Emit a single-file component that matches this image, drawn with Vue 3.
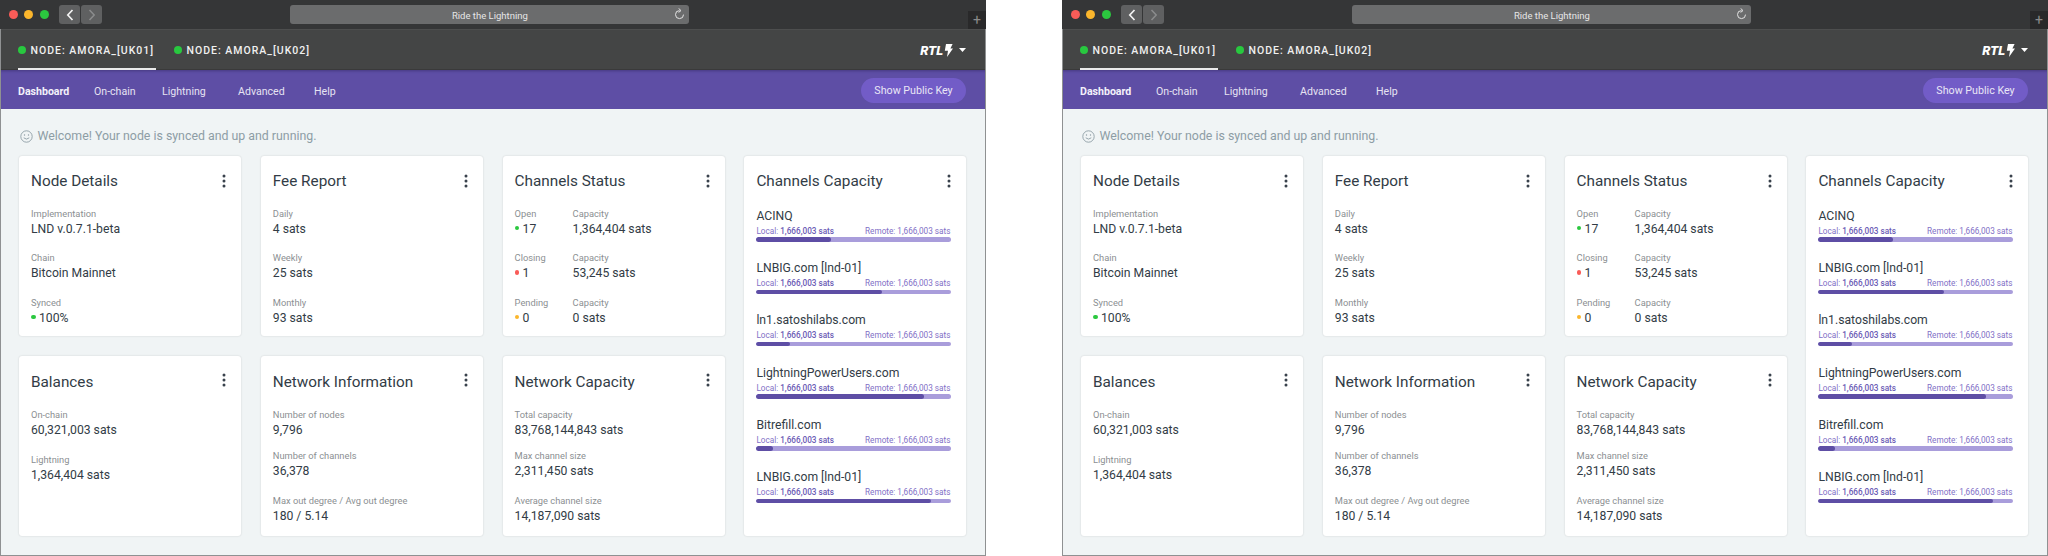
<script setup>
const windows = [1, 2]
const navItems = [
  { label: 'Dashboard', cls: 'active' },
  { label: 'On-chain', cls: 'n2' },
  { label: 'Lightning', cls: 'n3' },
  { label: 'Advanced', cls: 'n4' },
  { label: 'Help', cls: 'n5' }
]
const cards = [
  { title: 'Node Details', rows: [
    { label: 'Implementation', value: 'LND v.0.7.1-beta' },
    { label: 'Chain', value: 'Bitcoin Mainnet' },
    { label: 'Synced', value: '100%', dot: 'green' }
  ] },
  { title: 'Fee Report', rows: [
    { label: 'Daily', value: '4 sats' },
    { label: 'Weekly', value: '25 sats' },
    { label: 'Monthly', value: '93 sats' }
  ] },
  { title: 'Channels Status', status: true, rows: [
    { label: 'Open', value: '17', dot: 'green', cap: '1,364,404 sats' },
    { label: 'Closing', value: '1', dot: 'red', cap: '53,245 sats' },
    { label: 'Pending', value: '0', dot: 'amber', cap: '0 sats' }
  ] },
  { title: 'Balances', low: true, rows: [
    { label: 'On-chain', value: '60,321,003 sats' },
    { label: 'Lightning', value: '1,364,404 sats' }
  ] },
  { title: 'Network Information', low: true, rows: [
    { label: 'Number of nodes', value: '9,796', tight: true },
    { label: 'Number of channels', value: '36,378' },
    { label: 'Max out degree / Avg out degree', value: '180 / 5.14' }
  ] },
  { title: 'Network Capacity', low: true, rows: [
    { label: 'Total capacity', value: '83,768,144,843 sats', tight: true },
    { label: 'Max channel size', value: '2,311,450 sats' },
    { label: 'Average channel size', value: '14,187,090 sats' }
  ] }
]
const peers = [
  { name: 'ACINQ', pct: 38.5 },
  { name: 'LNBIG.com [lnd-01]', pct: 64.4 },
  { name: 'ln1.satoshilabs.com', pct: 17 },
  { name: 'LightningPowerUsers.com', pct: 85.8 },
  { name: 'Bitrefill.com', pct: 8.6 },
  { name: 'LNBIG.com [lnd-01]', pct: 89.4 }
]
</script>

<template>
  <div class="screen">
    <section v-for="w in windows" :key="w" class="window">
      <header class="titlebar">
        <span class="light red"></span>
        <span class="light yellow"></span>
        <span class="light green"></span>
        <span class="navbtn first">
          <svg width="8" height="12" viewBox="0 0 8 12"><path d="M6.5 1 L1.8 6 L6.5 11" fill="none" stroke="#f2f2f2" stroke-width="1.7"/></svg>
        </span>
        <span class="navbtn">
          <svg width="8" height="12" viewBox="0 0 8 12"><path d="M1.5 1 L6.2 6 L1.5 11" fill="none" stroke="#8b8c8d" stroke-width="1.5"/></svg>
        </span>
        <div class="address">
          <span>Ride the Lightning</span>
          <svg class="reload" width="11" height="12" viewBox="0 0 11 12"><path d="M5.5 2.6 A4 4 0 1 0 9.5 6.6" fill="none" stroke="#e4e4e4" stroke-width="1"/><path d="M4.6 0.4 L7 2.6 L4.6 4.4" fill="none" stroke="#e4e4e4" stroke-width="1"/></svg>
        </div>
        <div class="plus">+</div>
      </header>

      <div class="nodebar">
        <div class="tab selected"><i class="nodedot"></i>NODE: AMORA_[UK01]</div>
        <div class="tab"><i class="nodedot"></i>NODE: AMORA_[UK02]</div>
        <div class="logo">
          <span class="rtl">RTL</span>
          <svg class="bolt" width="9" height="13" viewBox="0 0 9 13"><path d="M2 0 H8.6 L6.4 4.4 H9 L3 13 L4 6.8 H0.8 Z" fill="#fff"/></svg>
          <svg class="caret" width="7" height="4" viewBox="0 0 7 4"><path d="M0 0 H7 L3.5 4 Z" fill="#fff"/></svg>
        </div>
      </div>

      <nav class="menu">
        <a v-for="item in navItems" :key="item.label" :class="['menuitem', item.cls]">{{ item.label }}</a>
        <button class="pubkey">Show Public Key</button>
      </nav>

      <main class="content">
        <div class="welcome">
          <svg width="13" height="13" viewBox="0 0 13 13"><circle cx="6.5" cy="6.5" r="5.7" fill="none" stroke="#8d9da5" stroke-width="0.9"/><circle cx="4.5" cy="5" r="0.7" fill="#8d9da5"/><circle cx="8.5" cy="5" r="0.7" fill="#8d9da5"/><path d="M3.7 7.8 Q6.5 10.4 9.3 7.8" fill="none" stroke="#8d9da5" stroke-width="0.9"/></svg>
          <span>Welcome! Your node is synced and up and running.</span>
        </div>

        <div class="grid">
          <article v-for="card in cards" :key="card.title" :class="['card', { low: card.low }]">
            <div class="cardhead">
              <h2>{{ card.title }}</h2>
              <svg class="kebab" width="4" height="14" viewBox="0 0 4 14"><circle cx="2" cy="2" r="1.5"/><circle cx="2" cy="7" r="1.5"/><circle cx="2" cy="12" r="1.5"/></svg>
            </div>
            <div v-for="row in card.rows" :key="row.label" :class="['row', { tight: row.tight, status: card.status }]">
              <div class="cell">
                <div class="label">{{ row.label }}</div>
                <div class="value"><i v-if="row.dot" :class="['dot', row.dot]"></i>{{ row.value }}</div>
              </div>
              <div v-if="card.status" class="cell">
                <div class="label">Capacity</div>
                <div class="value">{{ row.cap }}</div>
              </div>
            </div>
          </article>

          <article class="card capacity">
            <div class="cardhead">
              <h2>Channels Capacity</h2>
              <svg class="kebab" width="4" height="14" viewBox="0 0 4 14"><circle cx="2" cy="2" r="1.5"/><circle cx="2" cy="7" r="1.5"/><circle cx="2" cy="12" r="1.5"/></svg>
            </div>
            <div v-for="(peer, i) in peers" :key="i" class="peer">
              <div class="peername">{{ peer.name }}</div>
              <div class="peerlabels">
                <span>Local: <b>1,666,003 sats</b></span>
                <span>Remote: 1,666,003 sats</span>
              </div>
              <div class="bar"><div class="fill" :style="{ width: peer.pct + '%' }"></div></div>
            </div>
          </article>
        </div>
      </main>
    </section>
  </div>
</template>

<style>
html, body { margin: 0; background: #fff; }
</style>

<style scoped>
.screen {
  display: flex;
  justify-content: space-between;
  width: 2048px;
  height: 556px;
  overflow: hidden;
  font-family: Roboto, "Liberation Sans", sans-serif;
}
.window {
  width: 986px;
  height: 556px;
  box-sizing: border-box;
  display: flex;
  flex-direction: column;
  border-left: 1px solid #8f9192;
  border-right: 1px solid #8f9192;
  border-bottom: 1px solid #8f9192;
  background: #f0f4f5;
}
.titlebar {
  height: 29px;
  flex: none;
  display: flex;
  align-items: center;
  background: #353637;
  box-sizing: border-box;
  padding-left: 9px;
  margin-left: -1px;
  margin-right: -1px;
}
.light { width: 9px; height: 9px; border-radius: 50%; margin-right: 6.3px; }
.light.red { background: #f95c58; }
.light.yellow { background: #fbb62c; }
.light.green { background: #2bc83f; }
.navbtn {
  width: 21px;
  height: 19px;
  margin-right: 1px;
  border-radius: 3px;
  background: #5f6061;
  display: flex;
  align-items: center;
  justify-content: center;
}
.navbtn.first { margin-left: 4.5px; }
.address {
  margin-left: 187px;
  width: 399px;
  height: 19px;
  border-radius: 3px;
  background: #6b6c6d;
  color: #e6e6e6;
  font-size: 9.5px;
  padding-top: 2px;
  box-sizing: border-box;
  display: flex;
  align-items: center;
  justify-content: center;
  position: relative;
}
.reload { position: absolute; right: 4.5px; top: 3px; }
.plus {
  width: 18px;
  height: 18px;
  margin-left: auto;
  margin-top: 11px;
  background: #29292a;
  color: #8a8a8a;
  font-size: 14px;
  line-height: 18px;
  text-align: center;
}
.nodebar {
  height: 41px;
  flex: none;
  display: flex;
  align-items: stretch;
  padding-left: 16.5px;
  padding-right: 19px;
  box-sizing: border-box;
  background: #444545;
  border-top: 1px solid #4d4e4e;
  box-shadow: inset 0 -1px 0 #3a3a3a;
}
.tab {
  display: flex;
  align-items: center;
  width: 138px;
  margin-right: 18px;
  box-sizing: border-box;
  color: #f0f0f0;
  font-size: 10.5px;
  font-weight: 500;
  letter-spacing: 1px;
  white-space: nowrap;
}
.tab.selected { box-shadow: inset 0 -2px 0 #eaeaea; }
.nodedot {
  width: 8px;
  height: 8px;
  border-radius: 50%;
  background: #28c83f;
  margin-right: 5px;
  flex: none;
}
.logo { margin-left: auto; display: flex; align-items: center; }
.rtl { color: #fff; font-size: 13px; font-weight: 900; font-style: italic; }
.bolt { margin-left: 1px; }
.caret { margin-left: 6px; }
.menu {
  height: 39px;
  flex: none;
  display: flex;
  align-items: center;
  padding: 1px 19px 0 17px;
  box-sizing: border-box;
  background: #5e4ea5;
  box-shadow: inset 0 3px 3px -2px #463a80;
  color: #e6e3f3;
  font-size: 10.6px;
}
.menuitem { white-space: nowrap; flex: none; padding-top: 2px; }
.menuitem.active { font-weight: 700; color: #f3f1fa; width: 76px; }
.menuitem.n2 { width: 68px; }
.menuitem.n3 { width: 76px; }
.menuitem.n4 { width: 76px; }
.pubkey {
  margin-left: auto;
  width: 105px;
  height: 25px;
  padding: 0;
  border: 0;
  border-radius: 13px;
  background: #725cc7;
  color: #e9e6f6;
  font-family: inherit;
  font-size: 10.7px;
}
.content {
  flex: 1;
  padding: 0 18.3px 0 18px;
  min-height: 0;
}
.welcome {
  height: 47px;
  box-sizing: border-box;
  padding: 21px 0 0 1px;
  display: flex;
  align-items: flex-start;
  gap: 4.5px;
  color: #8d9da5;
  font-size: 12.35px;
  line-height: 13px;
  white-space: nowrap;
}
.grid {
  display: grid;
  grid-template-columns: repeat(4, 222px);
  grid-template-rows: 180px 180px;
  column-gap: 19.8px;
  row-gap: 20px;
}
.card {
  background: #fff;
  border-radius: 3px;
  box-shadow: 0 0 2px rgba(0, 0, 0, 0.16);
  padding: 12.5px 12px 0;
  box-sizing: border-box;
  color: #323c46;
}
.card.low { padding-top: 14px; }
.capacity {
  grid-column: 4;
  grid-row: 1 / span 2;
}
.cardhead {
  display: flex;
  align-items: center;
  justify-content: space-between;
  height: 24px;
  padding-right: 3px;
  margin-bottom: 14.2px;
}
.card.low .kebab { margin-top: -4px; }
.card.low .cardhead { margin-bottom: 14px; }
.card h2 {
  margin: 0;
  font-size: 15.3px;
  font-weight: 400;
  line-height: 24px;
  white-space: nowrap;
}
.kebab { fill: #39424c; }
.row { height: 30px; margin-bottom: 14.6px; display: flex; }
.row.tight { margin-bottom: 11px; }
.row.status .cell:first-child { width: 58px; flex: none; }
.label {
  font-size: 9.3px;
  line-height: 14px;
  color: #8b8f92;
  white-space: nowrap;
}
.value {
  font-size: 12.2px;
  line-height: 16px;
  color: #323c46;
  white-space: nowrap;
}
.dot {
  display: inline-block;
  width: 4.5px;
  height: 4.5px;
  border-radius: 50%;
  margin-right: 3.5px;
  vertical-align: 2.5px;
}
.dot.green { background: #2bc83f; }
.dot.red { background: #f95c58; }
.dot.amber { background: #fbb62c; }
.capacity .cardhead { margin-bottom: 15.3px; }
.peer { height: 52.3px; padding-right: 3px; box-sizing: border-box; }
.peername {
  font-size: 12.2px;
  line-height: 16px;
  color: #323c46;
  white-space: nowrap;
}
.peerlabels {
  display: flex;
  justify-content: space-between;
  font-size: 8.2px;
  line-height: 13px;
  margin-top: 1px;
  padding-right: 1px;
  color: #7f6fc6;
  white-space: nowrap;
}
.peerlabels b { font-weight: 500; color: #6b5bb5; }
.bar {
  height: 4.5px;
  border-radius: 3px;
  margin-top: -0.5px;
  background: #a99ddb;
  overflow: hidden;
}
.fill { height: 100%; background: #5e4ea5; border-radius: 3px; }
</style>
